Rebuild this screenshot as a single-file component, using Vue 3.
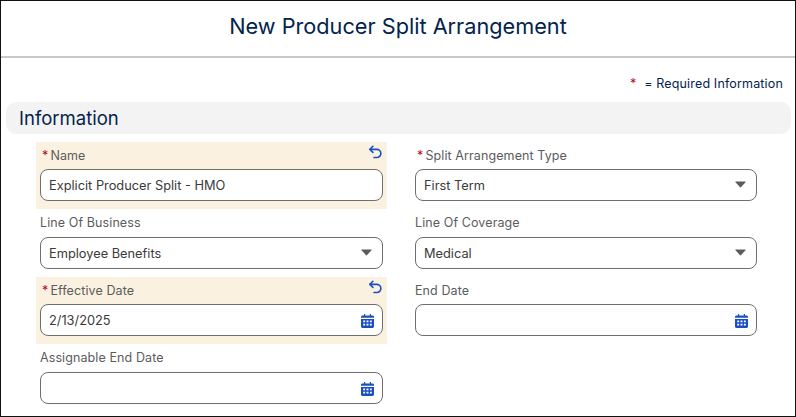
<script setup>
const fields = [
  { label: 'Name', value: 'Explicit Producer Split - HMO', required: true, edited: true, type: 'text' },
  { label: 'Split Arrangement Type', value: 'First Term', required: true, type: 'select' },
  { label: 'Line Of Business', value: 'Employee Benefits', type: 'select' },
  { label: 'Line Of Coverage', value: 'Medical', type: 'select' },
  { label: 'Effective Date', value: '2/13/2025', required: true, edited: true, type: 'date' },
  { label: 'End Date', value: '', type: 'date' },
  { label: 'Assignable End Date', value: '', type: 'date' },
]
</script>

<template>
  <div class="modal">
    <header class="head"><h1>New Producer Split Arrangement</h1></header>
    <p class="legend"><span class="star">*</span> = Required Information</p>
    <h2 class="section">Information</h2>
    <div class="grid">
      <div v-for="f in fields" :key="f.label" class="field" :class="{ edited: f.edited }">
        <div class="label">
          <span v-if="f.required" class="req">*</span>{{ f.label }}
          <svg v-if="f.edited" class="undo" viewBox="0 0 14 14" width="15" height="15" fill="none">
            <path d="M4.600 1.200 1.700 4.100l2.900 2.800" stroke="#1b4fc0" stroke-width="1.500" stroke-linecap="round" stroke-linejoin="round"/>
            <path d="M2 4.100h6.200a3.700 3.700 0 0 1 0 7.600H5.600" stroke="#1b4fc0" stroke-width="1.500" stroke-linecap="round"/>
          </svg>
        </div>
        <div class="control">
          <span class="value">{{ f.value }}</span>
          <svg v-if="f.type === 'select'" class="caret" viewBox="0 0 12 8" width="11" height="7">
            <path d="M.6.6h10.800a.5.5 0 0 1 .4.8L6.400 7.200a.5.5 0 0 1-.8 0L.2 1.400A.5.5 0 0 1 .6.6z" fill="#5c5c5c"/>
          </svg>
          <svg v-if="f.type === 'date'" class="cal" viewBox="0 0 13 14" width="13" height="14">
            <path fill="#1b4fc0" fill-rule="evenodd" d="M3 0h1.200v1.400h4.600V0H10v1.400h1.600c.8 0 1.400.6 1.400 1.300v1.100H0V2.700c0-.7.6-1.300 1.400-1.300H3zM0 4.900h13v7.700c0 .8-.6 1.400-1.400 1.400H1.400C.6 14 0 13.400 0 12.600zM2.200 6.600v1.700h1.900V6.600zm3.300 0v1.700h2V6.600zm3.400 0v1.700h1.900V6.600zM2.200 9.800v1.700h1.900V9.800zm3.300 0v1.700h2V9.800zm3.400 0v1.700h1.900V9.800z"/>
          </svg>
        </div>
      </div>
    </div>
  </div>
</template>

<style scoped>
.modal {
  box-sizing: border-box;
  width: 796px;
  height: 417px;
  border: 1px solid #111;
  background: #fff;
  font-family: Inter, "Liberation Sans", sans-serif;
  overflow: hidden;
}
.head {
  box-sizing: border-box;
  height: 57px;
  border-bottom: 2px solid #c9c9c9;
  display: flex;
  align-items: center;
  justify-content: center;
}
h1 {
  margin: 0 0 6px;
  font-size: 21.700px;
  font-weight: 400;
  color: #03234d;
}
.legend {
  margin: 18px 12px 0 0;
  height: 16px;
  line-height: 16px;
  text-align: right;
  font-size: 12.500px;
  letter-spacing: 0.16px;
  color: #03234d;
}
.star {
  color: #ba0517;
  margin-right: 4px;
}
.section {
  box-sizing: border-box;
  margin: 10px 4px 0 5px;
  height: 32px;
  padding-left: 13px;
  line-height: 32px;
  border-radius: 10px;
  background: #f3f3f3;
  font-size: 18.500px;
  font-weight: 400;
  color: #03234d;
}
.grid {
  display: grid;
  grid-template-columns: 351px 350px;
  grid-template-rows: 67px 68px 67px 68px;
  column-gap: 24px;
  margin: 8px 0 0 35px;
}
.field {
  box-sizing: border-box;
  padding: 0 4px;
}
.edited {
  background: #faf1e1;
}
.label {
  position: relative;
  height: 27px;
  line-height: 27px;
  font-size: 12.500px;
  letter-spacing: 0.1px;
  color: #5c5c5c;
  white-space: nowrap;
}
.field:nth-child(3) .label,
.field:nth-child(4) .label,
.field:nth-child(7) .label {
  height: 28px;
}
.req {
  color: #ba0517;
  margin: 0 2px 0 2px;
}
.undo {
  position: absolute;
  right: 0;
  top: 3px;
}
.control {
  box-sizing: border-box;
  height: 32px;
  border: 1px solid #706e6b;
  border-radius: 8px;
  background: #fff;
  padding: 0 8px;
  display: flex;
  align-items: center;
  justify-content: space-between;
  font-size: 12.800px;
  color: #3a3a3a;
}
.caret {
  margin-right: 2px;
  margin-top: -1px;
}
.cal {
  margin-right: 0;
  margin-top: 2px;
}
</style>
